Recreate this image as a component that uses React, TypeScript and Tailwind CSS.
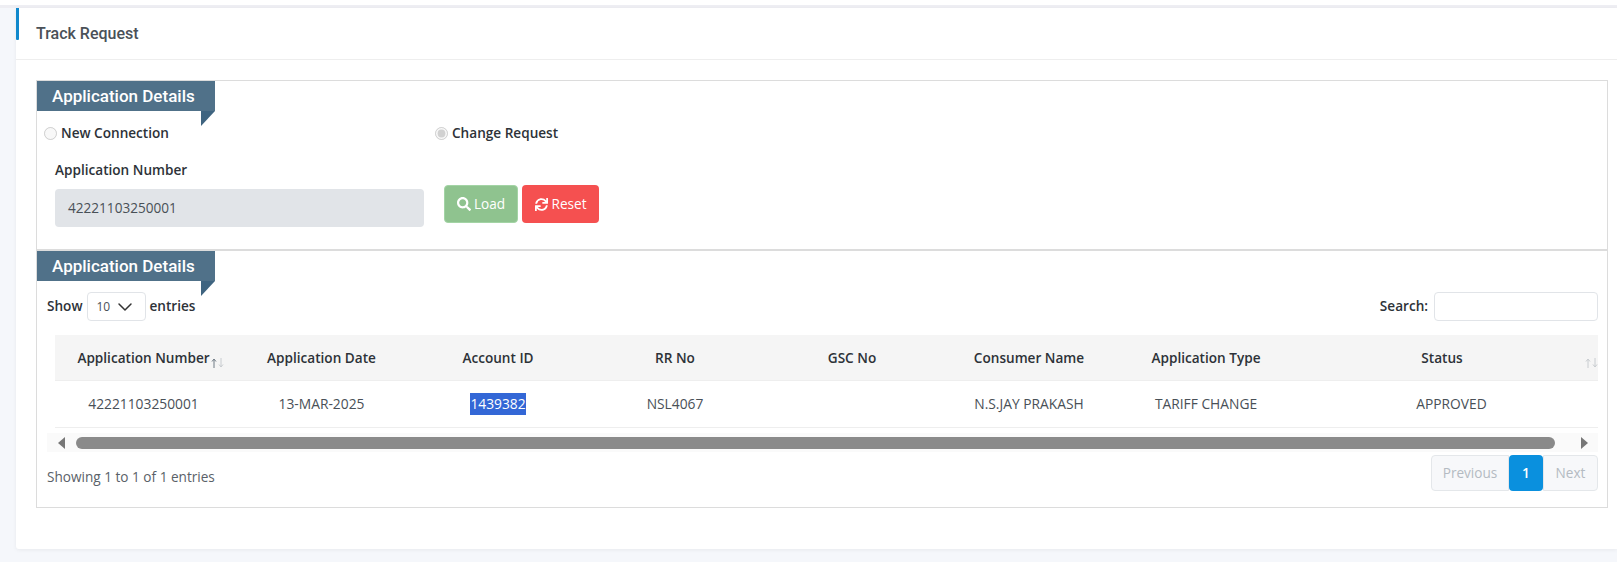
import React from "react";
import { FaSearch, FaSync } from "react-icons/fa";
import { ChevronDown } from "lucide-react";

function Ribbon() {
  return (
    <div className="relative h-[30px] w-[178px] shrink-0 bg-[#507189] pl-[15px] font-['Roboto',sans-serif] text-[17px] leading-[31px] font-medium text-white">
      Application Details
      <span className="absolute top-[30px] right-0 h-0 w-0 border-t-[15px] border-r-[14px] border-t-[#3f6480] border-r-transparent" />
    </div>
  );
}

function Arrow({ up, color }: { up?: boolean; color: string }) {
  return (
    <svg width="6" height="10" viewBox="0 0 6 10" fill="none" stroke={color} strokeWidth="1" style={{ transform: up ? undefined : "rotate(180deg)" }}>
      <path d="M3 10V1.5M1 3.5L3 1L5 3.5" />
    </svg>
  );
}

function SortIcons({ dim, className }: { dim?: boolean; className: string }) {
  return (
    <span className={`absolute bottom-[12px] flex gap-[1px] ${className}`}>
      <Arrow up color={dim ? "#c8ccd0" : "#6f7a84"} />
      <Arrow color="#c8ccd0" />
    </span>
  );
}

const headers = [
  ["Application Number", "w-[177px]"],
  ["Application Date", "w-[179px]"],
  ["Account ID", "w-[174px]"],
  ["RR No", "w-[180px]"],
  ["GSC No", "w-[174px]"],
  ["Consumer Name", "w-[180px]"],
  ["Application Type", "w-[174px]"],
  ["Status", "flex-1"],
];

const cells = [
  "42221103250001",
  "13-MAR-2025",
  "1439382",
  "NSL4067",
  "",
  "N.S.JAY PRAKASH",
  "TARIFF CHANGE",
  "APPROVED",
];

export default function App() {
  return (
    <div className="h-[562px] overflow-hidden bg-[#f5f7fb] font-['Open_Sans',sans-serif] text-[13.6px] text-[#495057]">
      <div className="h-[5px] bg-white" />
      <div className="h-[3px] bg-[#eeeef3]" />
      <div className="ml-[16px] h-[541px] rounded-bl-[3px] bg-white shadow-[0_1px_4px_rgba(0,0,0,0.06)]">
        <div className="relative flex h-[52px] items-center border-b border-[#eeeeee] pl-[20px] font-['Roboto',sans-serif] text-[16px] font-medium text-[#4a5158]">
          <span className="absolute top-0 left-0 h-[32px] w-[3px] rounded-b-[1px] bg-[#0f88cc]" />
          Track Request
        </div>

        <div className="mt-[20px] mr-[9px] ml-[20px] h-[428px] border border-[#dcdcdc]">
          <div className="h-[170px] border-b-2 border-[#dcdcdc]">
            <Ribbon />
            <div className="flex h-[47px] items-center pb-[2px] text-[#2d3238]">
              <label className="ml-[7px] flex w-[391px] items-center font-semibold">
                <input type="radio" disabled className="mr-[4px] h-[13px] w-[13px]" />
                New Connection
              </label>
              <label className="flex items-center font-semibold">
                <input type="radio" disabled defaultChecked className="mr-[4px] h-[13px] w-[13px]" />
                Change Request
              </label>
            </div>
            <div className="mt-[3px] flex pl-[18px]">
              <div className="w-[369px]">
                <div className="h-[18px] leading-[18px] font-semibold text-[#2d3238]">Application Number</div>
                <div className="mt-[10px] flex h-[38px] items-center rounded-[4px] bg-[#e1e4e8] pl-[13px]">42221103250001</div>
              </div>
              <div className="mt-[24px] ml-[20px] flex h-[38px] gap-[4px] text-white">
                <div className="flex w-[74px] items-center justify-center gap-[3px] rounded-[4px] border border-[#a3d4a5] bg-[#8fc38f]">
                  <FaSearch className="h-[14px] w-[14px]" />
                  Load
                </div>
                <div className="flex w-[77px] items-center justify-center gap-[4px] rounded-[4px] bg-[#f55050]">
                  <FaSync className="h-[13px] w-[13px]" />
                  Reset
                </div>
              </div>
            </div>
          </div>

          <Ribbon />

          <div className="pr-[9px] pl-[10px]">
            <div className="mt-[11px] flex h-[29px] items-center justify-between font-semibold text-[#2d3238]">
              <div className="flex items-center">
                Show
                <div className="mr-[4px] ml-[4px] flex h-[29px] w-[59px] items-center justify-between rounded-[4px] border border-[#e1e4e8] pr-[8px] pl-[9px] text-[12px] font-normal text-[#495057]">
                  10
                  <ChevronDown className="h-[24px] w-[24px] text-[#333]" strokeWidth={1.5} />
                </div>
                entries
              </div>
              <div className="flex items-center">
                Search:
                <div className="ml-[6px] h-[29px] w-[164px] rounded-[4px] border border-[#e1e4e8]" />
              </div>
            </div>

            <div className="mt-[14px] ml-[8px] flex h-[46px] border-b border-[#eeeeee] bg-[#f5f5f5] font-semibold text-[#2d3238]">
              {headers.map(([h, w], i) => (
                <div key={h} className={`relative flex items-center justify-center pt-[2px] ${w} ${i === 7 ? "pr-[7px]" : ""}`}>
                  {h}
                  {i === 0 && <SortIcons className="right-[8px]" />}
                  {i === 7 && <SortIcons dim className="right-0" />}
                </div>
              ))}
            </div>
            <div className="ml-[8px] flex h-[47px] border-b border-[#eeeeee] text-[13.8px]">
              {cells.map((c, i) => (
                <div key={i} className={`flex items-center justify-center ${headers[i][1]} ${i === 7 ? "pl-[12px]" : ""}`}>
                  {i === 2 ? <span className="bg-[#3367d6] leading-[22px] text-white">{c}</span> : c}
                </div>
              ))}
            </div>

            <div className="mt-[5px] flex h-[19px] items-center bg-[#fafafa] pr-[10px] pl-[11px]">
              <span className="h-0 w-0 border-y-[6px] border-r-[7px] border-y-transparent border-r-[#777]" />
              <span className="mr-[26px] ml-[11px] h-[12px] flex-1 rounded-[6px] bg-[#8a8a8a]" />
              <span className="h-0 w-0 border-y-[6px] border-l-[7px] border-y-transparent border-l-[#777]" />
            </div>

            <div className="mt-[3px] flex h-[36px] justify-between">
              <div className="mt-[12px] text-[#5a6168]">Showing 1 to 1 of 1 entries</div>
              <div className="flex h-[36px] text-[#b4bbc2]">
                <div className="flex w-[78px] items-center justify-center rounded-l-[4px] border border-[#e4e7ea] bg-[#f7f8fa]">Previous</div>
                <div className="flex w-[34px] items-center justify-center rounded-[4px] bg-[#0a90de] font-semibold text-white">1</div>
                <div className="flex w-[55px] items-center justify-center rounded-r-[4px] border border-[#e4e7ea] bg-[#f7f8fa]">Next</div>
              </div>
            </div>
          </div>
        </div>
      </div>
    </div>
  );
}
